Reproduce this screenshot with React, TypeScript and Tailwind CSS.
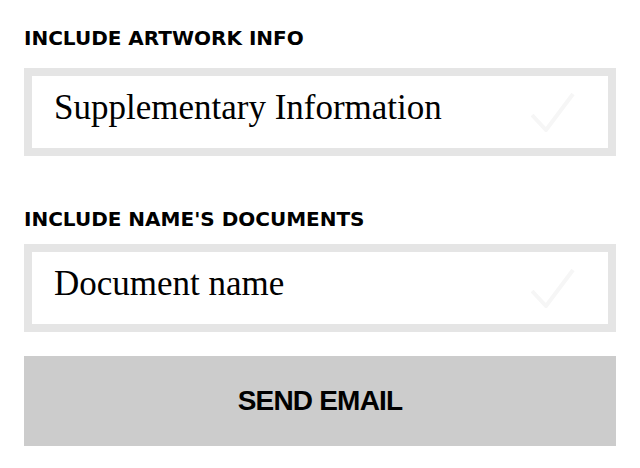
import type { ReactNode } from 'react'

function Check() {
  return (
    <svg width="44" height="40" viewBox="0 0 44 40" className="flex-shrink-0">
      <polyline points="1,23 15,38 42,2" fill="none" stroke="#f6f6f6" strokeWidth="4" />
    </svg>
  )
}

function Label({ children }: { children: ReactNode }) {
  return (
    <div className="h-7 leading-7 text-[20px] font-bold text-black font-['DejaVu_Sans',sans-serif]">
      {children}
    </div>
  )
}

function Field({ value }: { value: string }) {
  return (
    <div className="h-[88px] border-8 border-[#e5e5e5] bg-white flex items-center justify-between pl-[22px] pr-[33px]">
      <span className="pb-2 text-[35px] text-black font-['Liberation_Serif','Times_New_Roman',serif]">{value}</span>
      <Check />
    </div>
  )
}

export default function App() {
  return (
    <div className="w-[640px] h-[468px] bg-white px-6 pt-6">
      <Label>INCLUDE ARTWORK INFO</Label>
      <div className="mt-4">
        <Field value="Supplementary Information" />
      </div>
      <div className="mt-[49px]">
        <Label>INCLUDE NAME'S DOCUMENTS</Label>
      </div>
      <div className="mt-[11px]">
        <Field value="Document name" />
      </div>
      <button className="mt-6 w-full h-[90px] bg-[#cccccc] flex items-center justify-center text-[28px] font-bold tracking-[-0.8px] text-black font-['Liberation_Sans',Arial,sans-serif]">
        SEND EMAIL
      </button>
    </div>
  )
}
